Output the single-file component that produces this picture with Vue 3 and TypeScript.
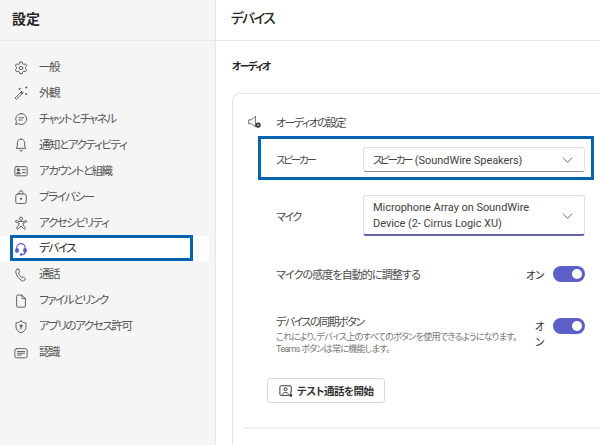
<script setup lang="ts">
interface NavItem {
  label: string
  icon: string
  active?: boolean
}

const navItems: NavItem[] = [
  { label: '一般', icon: 'gear' },
  { label: '外観', icon: 'wand' },
  { label: 'チャットとチャネル', icon: 'chat' },
  { label: '通知とアクティビティ', icon: 'bell' },
  { label: 'アカウントと組織', icon: 'card' },
  { label: 'プライバシー', icon: 'lock' },
  { label: 'アクセシビリティ', icon: 'access' },
  { label: 'デバイス', icon: 'headset', active: true },
  { label: '通話', icon: 'phone' },
  { label: 'ファイルとリンク', icon: 'file' },
  { label: 'アプリのアクセス許可', icon: 'shield' },
  { label: '認識', icon: 'note' }
]
</script>

<template>
  <div class="page">
    <aside class="sidebar">
      <h1 class="side-title">設定</h1>
      <nav class="nav">
        <div v-for="item in navItems" :key="item.label" class="nav-item" :class="{ active: item.active }">
          <svg class="nav-icon" viewBox="0 0 16 16" fill="none" stroke="#5c5c5c" stroke-width="1.100" stroke-linecap="round" stroke-linejoin="round">
            <template v-if="item.icon === 'gear'">
              <path d="M6.600 1.200h2.800l.4 1.900 1.500.8 1.800-.6 1.400 2.400-1.400 1.300v1.600l1.400 1.300-1.400 2.400-1.800-.6-1.500.8-.4 1.900H6.600l-.4-1.900-1.500-.8-1.800.6-1.400-2.400 1.400-1.300V7.000L1.500 5.700l1.400-2.400 1.800.6 1.500-.8z" />
              <circle cx="8" cy="8" r="2" />
            </template>
            <template v-else-if="item.icon === 'wand'">
              <path d="M1.500 13.500 9 6l1.500 1.500L3 15z" />
              <path d="M7.900 7.100l1.500 1.500" stroke-width="1.800" />
              <path d="M6.500 2.500v1.500M5.800 3.200h1.400M14 1v1.400M13.300 1.700h1.400M13.800 8.500v1.400M13.100 9.200h1.400" />
            </template>
            <template v-else-if="item.icon === 'chat'">
              <path d="M8.300 1.800a6.200 6.200 0 1 1-3 11.600l-3.500 1 1-3.300A6.200 6.200 0 0 1 8.300 1.800z" />
              <path d="M5.500 6.600h5.600M5.500 9.200h3.600" />
            </template>
            <template v-else-if="item.icon === 'bell'">
              <path d="M8 1.300c-2.500 0-4.200 2-4.200 4.500v3.400l-1.300 2.600h11l-1.300-2.600V5.800c0-2.500-1.700-4.500-4.200-4.500z" />
              <path d="M6.300 13.800a1.800 1.800 0 0 0 3.400 0" />
            </template>
            <template v-else-if="item.icon === 'card'">
              <rect x="1" y="3" width="14" height="10.500" rx="1.500" />
              <circle cx="5" cy="6.700" r="1.400" fill="#5c5c5c" />
              <path d="M2.800 10.800c.3-2 4.100-2 4.400 0z" fill="#5c5c5c" />
              <path d="M9.500 6.500h3.500M9.500 9.800h3.500" />
            </template>
            <template v-else-if="item.icon === 'lock'">
              <rect x="2" y="4.500" width="12" height="11" rx="2.200" />
              <path d="M6 4.500V2.800a2 2 0 0 1 4 0v1.700" />
              <circle cx="8" cy="10" r=".8" fill="#5c5c5c" />
            </template>
            <template v-else-if="item.icon === 'access'">
              <circle cx="8" cy="3" r="1.800" />
              <path d="M2 5.200c-1.100.8-.6 1.900.5 2L5.800 8l-.5 2.500L3.200 13.600c-.7 1.300.8 2 1.600 1.100L8 11.500l3.200 3.200c.8.900 2.300.2 1.600-1.100l-2.100-3.100-.5-2.500 3.300-.8c1.100-.1 1.600-1.200.5-2L10 6.300H6z" />
            </template>
            <template v-else-if="item.icon === 'headset'">
              <g stroke="#5b5fc7" stroke-width="1.300">
                <path d="M3.200 8V6.600a4.800 4.800 0 0 1 9.600 0V8M12.800 11.500c0 1.900-1.700 2.900-3.600 2.900" />
                <rect x="2" y="7.800" width="2.800" height="3.900" rx="1" fill="#5b5fc7" />
                <rect x="11.200" y="7.800" width="2.800" height="3.900" rx="1" fill="#5b5fc7" />
                <circle cx="8" cy="14.300" r=".8" fill="#5b5fc7" />
              </g>
            </template>
            <template v-else-if="item.icon === 'phone'">
              <path d="M3.300 1.500 5.300 1l1.300 3.200-1.300 1.500c.5 2 1.700 3.800 3.400 5.100l1.800-.7 2.500 2.300-1 1.800c-.6.700-1.700.8-2.600.4C5.500 12.800 2.700 9 2 4.500c-.1-1.200.4-2.400 1.300-3z" />
            </template>
            <template v-else-if="item.icon === 'file'">
              <path d="M3 2.200A1 1 0 0 1 4 1.200h5l4 4V14a1 1 0 0 1-1 1H4a1 1 0 0 1-1-1z" />
              <path d="M9 1.200v3a1 1 0 0 0 1 1h3" />
            </template>
            <template v-else-if="item.icon === 'shield'">
              <path d="M8 1.200c1.500 1.300 3.400 2 5.700 2.100V8c0 3-2.300 5.400-5.700 6.800C4.600 13.400 2.300 11 2.300 8V3.300C4.600 3.200 6.500 2.500 8 1.200z" />
              <circle cx="8" cy="6.700" r="1.200" fill="#5c5c5c" />
              <path d="M8 7.500v3" />
            </template>
            <template v-else>
              <rect x="1" y="3" width="14" height="10.500" rx="1.800" />
              <path d="M4 6.300h8M4 8.300h8M4 10.300h4.500" />
            </template>
          </svg>
          <span>{{ item.label }}</span>
          <div v-if="item.active" class="callout nav-callout"></div>
        </div>
      </nav>
    </aside>

    <main class="content">
      <h2 class="main-title">デバイス</h2>
      <div class="body">
        <h3 class="section-title">オーディオ</h3>
        <section class="card">
          <div class="audio-head">
            <svg class="speaker" viewBox="0 0 16 16" fill="none" stroke="#5c5c5c" stroke-width="1" stroke-linejoin="round">
              <path d="M.8 5.500v4.500h3l4.700 3.500V1.500L3.800 5.500z" />
              <circle cx="11.500" cy="11.500" r="3" fill="#333" stroke="none" />
              <circle cx="11.500" cy="11.500" r="1" fill="#fff" stroke="none" />
            </svg>
            <span>オーディオの設定</span>
          </div>

          <div class="field speaker-field">
            <label>スピーカー</label>
            <div class="select">
              <span><span class="kana">スピーカー</span> (SoundWire Speakers)</span>
              <svg class="chev" viewBox="0 0 12 8" fill="none" stroke="#616161" stroke-width="1"><path d="M1 1.500 6 6.500l5-5" /></svg>
            </div>
            <div class="callout field-callout"></div>
          </div>

          <div class="field mic-field">
            <label>マイク</label>
            <div class="select tall">
              <span>Microphone Array on SoundWire<br />Device (2- Cirrus Logic XU)</span>
              <svg class="chev" viewBox="0 0 12 8" fill="none" stroke="#616161" stroke-width="1"><path d="M1 1.500 6 6.500l5-5" /></svg>
            </div>
          </div>

          <div class="toggle-row auto-row">
            <span class="row-text">マイクの感度を自動的に調整する</span>
            <span class="on-label">オン</span>
            <span class="toggle"><i></i></span>
          </div>

          <div class="toggle-row sync-row">
            <div class="row-text">
              <div>デバイスの同期ボタン</div>
              <p>これにより、デバイス上のすべてのボタンを使用できるようになります。<br />Teams ボタンは常に機能します。</p>
            </div>
            <span class="on-label narrow">オン</span>
            <span class="toggle"><i></i></span>
          </div>

          <button class="test-btn">
            <svg viewBox="0 0 16 16" fill="none" stroke="#333" stroke-width="1.100" stroke-linejoin="round">
              <path d="M12 13H2.500A1.500 1.500 0 0 1 1 11.500v-8A1.500 1.500 0 0 1 2.500 2h10A1.500 1.500 0 0 1 14 3.500V9" />
              <circle cx="7.500" cy="6" r="1.800" />
              <path d="M4 12c.3-3 6.700-3 7 0" />
              <circle cx="13.500" cy="13" r="1.600" fill="#333" stroke="none" />
              <path d="M13.500 8.500v3" />
            </svg>
            テスト通話を開始
          </button>

          <div class="divider"></div>
        </section>
      </div>
    </main>
  </div>
</template>

<style>
html,
body {
  margin: 0;
  overflow: hidden;
}
</style>

<style scoped>
.page {
  display: flex;
  width: 600px;
  height: 445px;
  overflow: hidden;
  background: #fff;
  color: #4a4a4a;
  font-family: Roboto, "Noto Sans CJK JP", sans-serif;
  font-size: 11px;
  font-feature-settings: "palt";
  letter-spacing: -0.5px;
}

.sidebar {
  flex: 0 0 215px;
  background: #f5f5f5;
  border-right: 1px solid #e6e6e6;
}

.side-title {
  margin: 0;
  height: 41px;
  box-sizing: border-box;
  padding-left: 12px;
  border-bottom: 1px solid #e6e6e6;
  font-size: 14px;
  font-weight: 700;
  line-height: 39px;
  letter-spacing: 0;
  color: #242424;
}

.nav {
  padding-top: 14px;
  padding-right: 6px;
}

.nav-item {
  position: relative;
  display: flex;
  align-items: center;
  gap: 11px;
  height: 25px;
  margin-bottom: 0.93px;
  padding-left: 14px;
  border-radius: 3px;
  font-size: 11.500px;
  letter-spacing: -1.400px;
  line-height: 25px;
  color: #555;
}

.nav-item.active {
  background: #fff;
  color: #242424;
}

.nav-icon {
  flex: 0 0 14px;
  width: 14px;
  height: 14px;
}

.callout {
  position: absolute;
  box-sizing: border-box;
  border: 3px solid #0563b0;
}

.nav-callout {
  left: 10px;
  top: -1px;
  width: 183px;
  height: 26px;
}

.content {
  flex: 1;
  min-width: 0;
}

.main-title {
  margin: 0;
  height: 41px;
  box-sizing: border-box;
  padding-left: 15px;
  border-bottom: 1px solid #e6e6e6;
  font-size: 13.500px;
  font-weight: 500;
  line-height: 36px;
  letter-spacing: -1.500px;
  color: #242424;
}

.body {
  padding-left: 16px;
}

.section-title {
  margin: 0;
  height: 52px;
  font-size: 10px;
  font-weight: 700;
  line-height: 51px;
  letter-spacing: -1.500px;
  color: #242424;
}

.card {
  box-sizing: border-box;
  width: 400px;
  height: 380px;
  padding: 0 0 0 15px;
  border: 1px solid #e4e4e4;
  border-right: none;
  border-radius: 8px;
}

.audio-head {
  display: flex;
  align-items: center;
  gap: 14px;
  height: 20px;
  margin-top: 18px;
  letter-spacing: -1.600px;
}

.speaker {
  width: 14px;
  height: 14px;
}

.field {
  position: relative;
  display: flex;
  align-items: center;
  width: 309px;
  margin-left: 28px;
}

.field label {
  flex: 0 0 87px;
}

.speaker-field {
  margin-top: 15px;
}

.speaker-field label {
  font-size: 10.500px;
  letter-spacing: -2.200px;
}

.field-callout {
  left: -18px;
  top: -11px;
  width: 336px;
  height: 44px;
}

.mic-field {
  margin-top: 23px;
}

.mic-field label {
  letter-spacing: -1.500px;
}

.select {
  display: flex;
  flex: 0 0 222px;
  box-sizing: border-box;
  align-items: center;
  justify-content: space-between;
  height: 25px;
  padding: 0 9px;
  border: 1px solid #e0e0e0;
  border-bottom-color: #8a8a8a;
  border-radius: 3px;
  background: #fff;
  font-size: 11px;
  color: #424242;
}

.select > span {
  letter-spacing: -0.05px;
}

.select .kana {
  margin-right: 1px;
  font-size: 10.500px;
  letter-spacing: -2.300px;
}

.select.tall {
  height: 41px;
  padding-top: 2px;
  border-bottom: 2px solid #6264a7;
  line-height: 16px;
}

.chev {
  width: 11px;
  height: 8px;
  margin-right: 2px;
}

.toggle-row {
  display: flex;
  width: 309px;
  margin-left: 28px;
}

.auto-row {
  align-items: center;
  height: 16px;
  margin-top: 30px;
  letter-spacing: -0.900px;
}

.auto-row .row-text {
  padding-top: 3px;
}

.sync-row {
  align-items: flex-start;
  margin-top: 36px;
  height: 49px;
}

.row-text {
  flex: 1;
  line-height: 16px;
}

.row-text div {
  margin-top: -3px;
  letter-spacing: -1.500px;
}

.row-text p {
  margin: 0;
  font-size: 9px;
  line-height: 12px;
  letter-spacing: -0.700px;
  color: #757575;
  white-space: nowrap;
}

.on-label {
  margin-right: 9px;
  font-size: 10.500px;
  letter-spacing: -0.500px;
  color: #333;
}

.on-label.narrow {
  width: 9px;
  margin-right: 9px;
  padding-top: 1px;
  line-height: 16px;
}

.toggle {
  display: flex;
  flex: 0 0 32px;
  box-sizing: border-box;
  align-items: center;
  justify-content: flex-end;
  height: 16px;
  padding-right: 3px;
  border-radius: 8px;
  background: #5b5fc7;
}

.toggle i {
  width: 10px;
  height: 10px;
  border-radius: 50%;
  background: #fff;
}

.test-btn {
  display: flex;
  align-items: center;
  gap: 4px;
  box-sizing: border-box;
  width: 118px;
  height: 25px;
  margin: 11px 0 0 19px;
  padding: 0 0 0 11px;
  border: 1px solid #d8d8d8;
  border-radius: 3px;
  background: #fff;
  font-family: inherit;
  font-size: 10.500px;
  font-feature-settings: inherit;
  letter-spacing: -0.5px;
  font-weight: 700;
  color: #333;
}

.test-btn svg {
  flex: 0 0 14px;
  width: 14px;
  height: 14px;
}

.divider {
  height: 2px;
  margin: 24px 0 0 -5px;
  background: #f0f0f0;
}
</style>
